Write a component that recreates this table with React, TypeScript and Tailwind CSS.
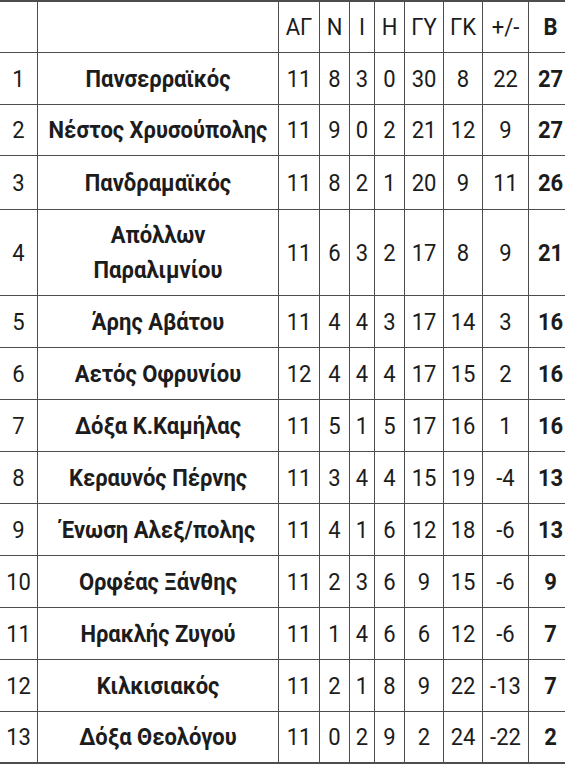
import React from "react";

type Row = [string, string, number, number, number, number, number, number, number, number];

const rows: Row[] = [
  ["1", "Πανσερραϊκός", 11, 8, 3, 0, 30, 8, 22, 27],
  ["2", "Νέστος Χρυσούπολης", 11, 9, 0, 2, 21, 12, 9, 27],
  ["3", "Πανδραμαϊκός", 11, 8, 2, 1, 20, 9, 11, 26],
  ["4", "Απόλλων|Παραλιμνίου", 11, 6, 3, 2, 17, 8, 9, 21],
  ["5", "Άρης Αβάτου", 11, 4, 4, 3, 17, 14, 3, 16],
  ["6", "Αετός Οφρυνίου", 12, 4, 4, 4, 17, 15, 2, 16],
  ["7", "Δόξα Κ.Καμήλας", 11, 5, 1, 5, 17, 16, 1, 16],
  ["8", "Κεραυνός Πέρνης", 11, 3, 4, 4, 15, 19, -4, 13],
  ["9", "Ένωση Αλεξ/πολης", 11, 4, 1, 6, 12, 18, -6, 13],
  ["10", "Ορφέας Ξάνθης", 11, 2, 3, 6, 9, 15, -6, 9],
  ["11", "Ηρακλής Ζυγού", 11, 1, 4, 6, 6, 12, -6, 7],
  ["12", "Κιλκισιακός", 11, 2, 1, 8, 9, 22, -13, 7],
  ["13", "Δόξα Θεολόγου", 11, 0, 2, 9, 2, 24, -22, 2],
];

const grid =
  "grid grid-cols-[38px_241px_41px_30px_25px_30px_39px_39px_46px_44px]";
const cell =
  "flex items-center justify-center border-r border-b border-[#4d4d4d] text-center";
const txt = "inline-block scale-y-[1.1]";

export default function App() {
  return (
    <div className="w-[565px] h-[768px] overflow-hidden bg-white">
      <div
        className="w-[573px] border-t-2 border-[#4d4d4d] text-[#1c1c1c] text-[22px] leading-none"
        style={{ fontFamily: "Roboto, 'Noto Sans', sans-serif" }}
      >
        <div className={`${grid} h-[51px]`}>
          <div className={cell}></div>
          <div className={cell}></div>
          {["ΑΓ", "Ν", "Ι", "Η", "ΓΥ", "ΓΚ", "+/-"].map((h) => (
            <div key={h} className={cell}>
              <span className={txt}>{h}</span>
            </div>
          ))}
          <div className={`${cell} font-bold`}>
            <span className={txt}>Β</span>
          </div>
        </div>
        {rows.map((r, i) => {
          const tall = r[1].includes("|");
          const h = tall
            ? "h-[86px]"
            : i === 1
            ? "h-[51px]"
            : i === 2
            ? "h-[54px]"
            : "h-[52px]";
          return (
            <div
              key={r[0]}
              className={`${grid} ${h} ${i === rows.length - 1 ? "[&>div]:border-b-2" : ""}`}
            >
              <div className={cell}>
                <span className={txt}>{r[0]}</span>
              </div>
              <div className={`${cell} font-bold`}>
                {tall ? (
                  <span className={`${txt} leading-[32px]`}>
                    {r[1].split("|")[0]}
                    <br />
                    {r[1].split("|")[1]}
                  </span>
                ) : (
                  <span className={txt}>{r[1]}</span>
                )}
              </div>
              {r.slice(2, 9).map((v, j) => (
                <div key={j} className={cell}>
                  <span className={txt}>{v}</span>
                </div>
              ))}
              <div className={`${cell} font-bold`}>
                <span className={txt}>{r[9]}</span>
              </div>
            </div>
          );
        })}
      </div>
    </div>
  );
}
